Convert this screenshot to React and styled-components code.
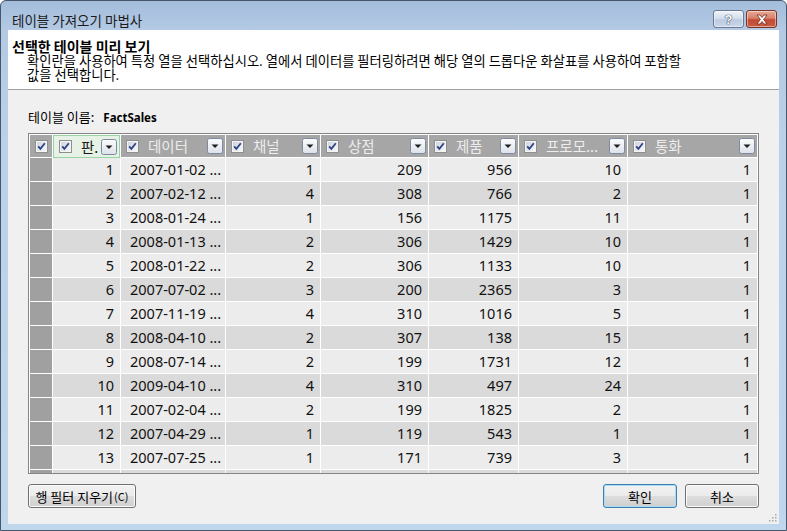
import React from "react";
import styled, { createGlobalStyle } from "styled-components";

const KR = `"Noto Sans CJK KR", "Noto Sans", sans-serif`;
const NUM = `"Noto Sans", "Noto Sans CJK KR", sans-serif`;

const GlobalStyle = createGlobalStyle`
  html, body { margin: 0; padding: 0; background: #fff; }
  body { width: 787px; height: 531px; overflow: hidden; }
`;

// window frame
const Frame = styled.div`
  box-sizing: border-box;
  width: 787px;
  height: 531px;
  border: 1px solid #46566d;
  border-radius: 6px 6px 0 0;
  background: linear-gradient(180deg, #a3bddb 0px, #b4cae4 30px, #bbd1e9 140px, #c0d6ec 100%);
  padding: 0 7px 7px;
  display: flex;
  flex-direction: column;
`;

const TitleBar = styled.div`
  height: 29px;
  margin: 0 -7px;
  padding: 9px 9px 0 11px;
  box-sizing: border-box;
  display: flex;
  align-items: flex-start;
  justify-content: space-between;
`;

const TitleText = styled.div`
  font-family: ${KR};
  font-size: 13.5px;
  line-height: 20px;
  color: #1b1b1b;
`;

const CaptionButtons = styled.div`
  display: flex;
  gap: 2px;
`;

const CaptionButton = styled.div`
  box-sizing: border-box;
  width: 31px;
  height: 18px;
  border-radius: 3px;
  display: flex;
  align-items: center;
  justify-content: center;
  border: 1px solid ${(p) => (p.$close ? "#7a3328" : "#6b7a92")};
  background: ${(p) =>
    p.$close
      ? "linear-gradient(180deg, #e9a996 0%, #d7806a 45%, #c24a33 55%, #c95d44 100%)"
      : "linear-gradient(180deg, #eef3f9 0%, #d5e0ee 45%, #bccbe0 55%, #c9d7ea 100%)"};
  box-shadow: inset 0 0 0 1px rgba(255, 255, 255, 0.45);
`;

const HelpMark = styled.span`
  font-family: "Liberation Sans", sans-serif;
  font-weight: bold;
  font-size: 13px;
  line-height: 13px;
  color: #fff;
  text-shadow: 0 0 1px #3d4a60, 0 0 1px #3d4a60, 0 0 1px #3d4a60;
`;

// client area
const Client = styled.div`
  flex: 1;
  background: #f0f0f0;
  display: flex;
  flex-direction: column;
  position: relative;
`;

const Header = styled.div`
  box-sizing: border-box;
  height: 60px;
  background: #fff;
  border-bottom: 1px solid #a0a0a0;
  padding: 8px 0 0 4px;
`;

const HeadTitle = styled.div`
  font-family: ${KR};
  font-weight: bold;
  font-size: 14px;
  line-height: 16px;
  color: #000;
`;

const HeadDesc = styled.div`
  font-family: ${KR};
  font-size: 13.3px;
  line-height: 14px;
  color: #000;
  padding-left: 15px;
  white-space: nowrap;
`;

const Body = styled.div`
  flex: 1;
  padding: 19px 20px 16px;
  display: flex;
  flex-direction: column;
`;

const TableLabel = styled.div`
  font-family: ${KR};
  font-size: 13px;
  line-height: 16px;
  color: #000;
  margin-bottom: 7px;
  b {
    font-family: ${NUM};
    font-size: 11.5px;
    margin-left: 9px;
  }
`;

const Grid = styled.div`
  box-sizing: border-box;
  width: 731px;
  height: 341px;
  border: 1px solid #858585;
  padding: 1px;
  background: #fff;
  overflow: hidden;
  display: grid;
  grid-template-columns: 22px 67px 104px 94px 107px 89px 108px 129px;
  grid-template-rows: 22px;
  grid-auto-rows: 23px;
  gap: 1px;
`;

const Corner = styled.div`
  background: #a6a6a6;
  display: flex;
  align-items: center;
  justify-content: center;
`;

const HeadCell = styled.div`
  box-sizing: border-box;
  display: flex;
  align-items: center;
  padding: 0 2px 0 5px;
  background: ${(p) => (p.$active ? "#e6f2e6" : "#a6a6a6")};
  border: ${(p) => (p.$active ? "1px solid #96d4a4" : "none")};
  margin: ${(p) => (p.$active ? "0 0 -1px 0" : "0")};
  min-width: 0;
`;

const HeadLabel = styled.span`
  flex: 1;
  margin-left: 9px;
  font-family: ${KR};
  font-size: 14.5px;
  line-height: 20px;
  color: ${(p) => (p.$active ? "#1a1a1a" : "#ededed")};
  white-space: nowrap;
`;

const RowHead = styled.div`
  background: #a0a0a0;
`;

const Cell = styled.div`
  background: ${(p) => (p.$even ? "#dadada" : "#ececec")};
  font-family: ${NUM};
  font-size: 14.5px;
  line-height: 23px;
  color: #111;
  text-align: ${(p) => (p.$left ? "left" : "right")};
  padding: ${(p) => (p.$left ? "0 0 0 9px" : "0 6px 0 0")};
  white-space: nowrap;
  overflow: hidden;
`;

const Footer = styled.div`
  margin-top: 10px;
  display: flex;
  justify-content: space-between;
`;

const ButtonGroup = styled.div`
  display: flex;
  gap: 8px;
`;

const Button = styled.div`
  box-sizing: border-box;
  height: 24px;
  width: ${(p) => p.$w}px;
  border-radius: 3px;
  border: 1px solid ${(p) => (p.$primary ? "#3c7fb1" : "#707070")};
  background: linear-gradient(180deg, #f2f2f2 0%, #ebebeb 50%, #dddddd 51%, #cfcfcf 100%);
  box-shadow: inset 0 0 0 1px ${(p) => (p.$primary ? "#a6dcf5" : "#fbfbfb")};
  display: flex;
  align-items: center;
  justify-content: center;
  font-family: ${KR};
  font-size: 13px;
  color: #000;
  small {
    font-size: 11px;
    margin-left: 1px;
  }
`;

const Grip = styled.svg`
  position: absolute;
  right: 2px;
  bottom: 2px;
`;

function Check() {
  return (
    <svg width="13" height="13" viewBox="0 0 13 13">
      <defs>
        <linearGradient id="cbg" x1="0" y1="0" x2="1" y2="1">
          <stop offset="0" stopColor="#cfd4dc" />
          <stop offset="1" stopColor="#f6f7f9" />
        </linearGradient>
      </defs>
      <rect x="0.5" y="0.5" width="12" height="12" fill="#f4f4f4" stroke="#8e8f8f" />
      <rect x="2" y="2" width="9" height="9" fill="url(#cbg)" />
      <path d="M3.2 6.3 L5.4 8.8 L9.8 3.2" fill="none" stroke="#2c4282" strokeWidth="1.8" />
    </svg>
  );
}

function DropButton() {
  return (
    <svg width="16" height="16" viewBox="0 0 16 16">
      <defs>
        <linearGradient id="dbg" x1="0" y1="0" x2="0" y2="1">
          <stop offset="0" stopColor="#fbfcfd" />
          <stop offset="1" stopColor="#dde2ea" />
        </linearGradient>
      </defs>
      <rect x="0.5" y="0.5" width="15" height="15" rx="2" fill="url(#dbg)" stroke="#7d8aa0" />
      <path d="M4.5 6.5 H11.5 L8 10 Z" fill="#1f1f1f" />
    </svg>
  );
}

const columns = [
  { label: "판.", active: true },
  { label: "데이터" },
  { label: "채널" },
  { label: "상점" },
  { label: "제품" },
  { label: "프로모..." },
  { label: "통화" },
];

const rows = [
  [1, "2007-01-02", 1, 209, 956, 10, 1],
  [2, "2007-02-12", 4, 308, 766, 2, 1],
  [3, "2008-01-24", 1, 156, 1175, 11, 1],
  [4, "2008-01-13", 2, 306, 1429, 10, 1],
  [5, "2008-01-22", 2, 306, 1133, 10, 1],
  [6, "2007-07-02", 3, 200, 2365, 3, 1],
  [7, "2007-11-19", 4, 310, 1016, 5, 1],
  [8, "2008-04-10", 2, 307, 138, 15, 1],
  [9, "2008-07-14", 2, 199, 1731, 12, 1],
  [10, "2009-04-10", 4, 310, 497, 24, 1],
  [11, "2007-02-04", 2, 199, 1825, 2, 1],
  [12, "2007-04-29", 1, 119, 543, 1, 1],
  [13, "2007-07-25", 1, 171, 739, 3, 1],
  ["", "", "", "", "", "", ""],
];

export default function App() {
  return (
    <>
      <GlobalStyle />
      <Frame>
        <TitleBar>
          <TitleText>테이블 가져오기 마법사</TitleText>
          <CaptionButtons>
            <CaptionButton>
              <HelpMark>?</HelpMark>
            </CaptionButton>
            <CaptionButton $close>
              <svg width="14" height="11" viewBox="0 0 14 11">
                <path
                  d="M2 1 L5 1 L7 3.5 L9 1 L12 1 L8.6 5.5 L12 10 L9 10 L7 7.5 L5 10 L2 10 L5.4 5.5 Z"
                  fill="#fff"
                  stroke="#6e2a20"
                  strokeWidth="0.8"
                />
              </svg>
            </CaptionButton>
          </CaptionButtons>
        </TitleBar>
        <Client>
          <Header>
            <HeadTitle>선택한 테이블 미리 보기</HeadTitle>
            <HeadDesc>
              확인란을 사용하여 특정 열을 선택하십시오. 열에서 데이터를 필터링하려면 해당 열의 드롭다운 화살표를 사용하여 포함할
              <br />
              값을 선택합니다.
            </HeadDesc>
          </Header>
          <Body>
            <TableLabel>
              테이블 이름:<b>FactSales</b>
            </TableLabel>
            <Grid>
              <Corner>
                <Check />
              </Corner>
              {columns.map((c) => (
                <HeadCell key={c.label} $active={c.active}>
                  <Check />
                  <HeadLabel $active={c.active}>{c.label}</HeadLabel>
                  <DropButton />
                </HeadCell>
              ))}
              {rows.map((r, i) => (
                <React.Fragment key={i}>
                  <RowHead />
                  {r.map((v, j) => (
                    <Cell key={j} $even={i % 2 === 1} $left={j === 1}>
                      {j === 1 && v ? `${v} ...` : v}
                    </Cell>
                  ))}
                </React.Fragment>
              ))}
            </Grid>
            <Footer>
              <Button $w={108}>
                행 필터 지우기<small>(C)</small>
              </Button>
              <ButtonGroup>
                <Button $w={74} $primary>
                  확인
                </Button>
                <Button $w={74}>취소</Button>
              </ButtonGroup>
            </Footer>
          </Body>
          <Grip width="9" height="9" viewBox="0 0 9 9">
            {[
              [7, 1],
              [7, 4],
              [4, 4],
              [7, 7],
              [4, 7],
              [1, 7],
            ].map(([x, y]) => (
              <rect key={`${x}-${y}`} x={x} y={y} width="1.5" height="1.5" fill="#a8a8a8" />
            ))}
          </Grip>
        </Client>
      </Frame>
    </>
  );
}
